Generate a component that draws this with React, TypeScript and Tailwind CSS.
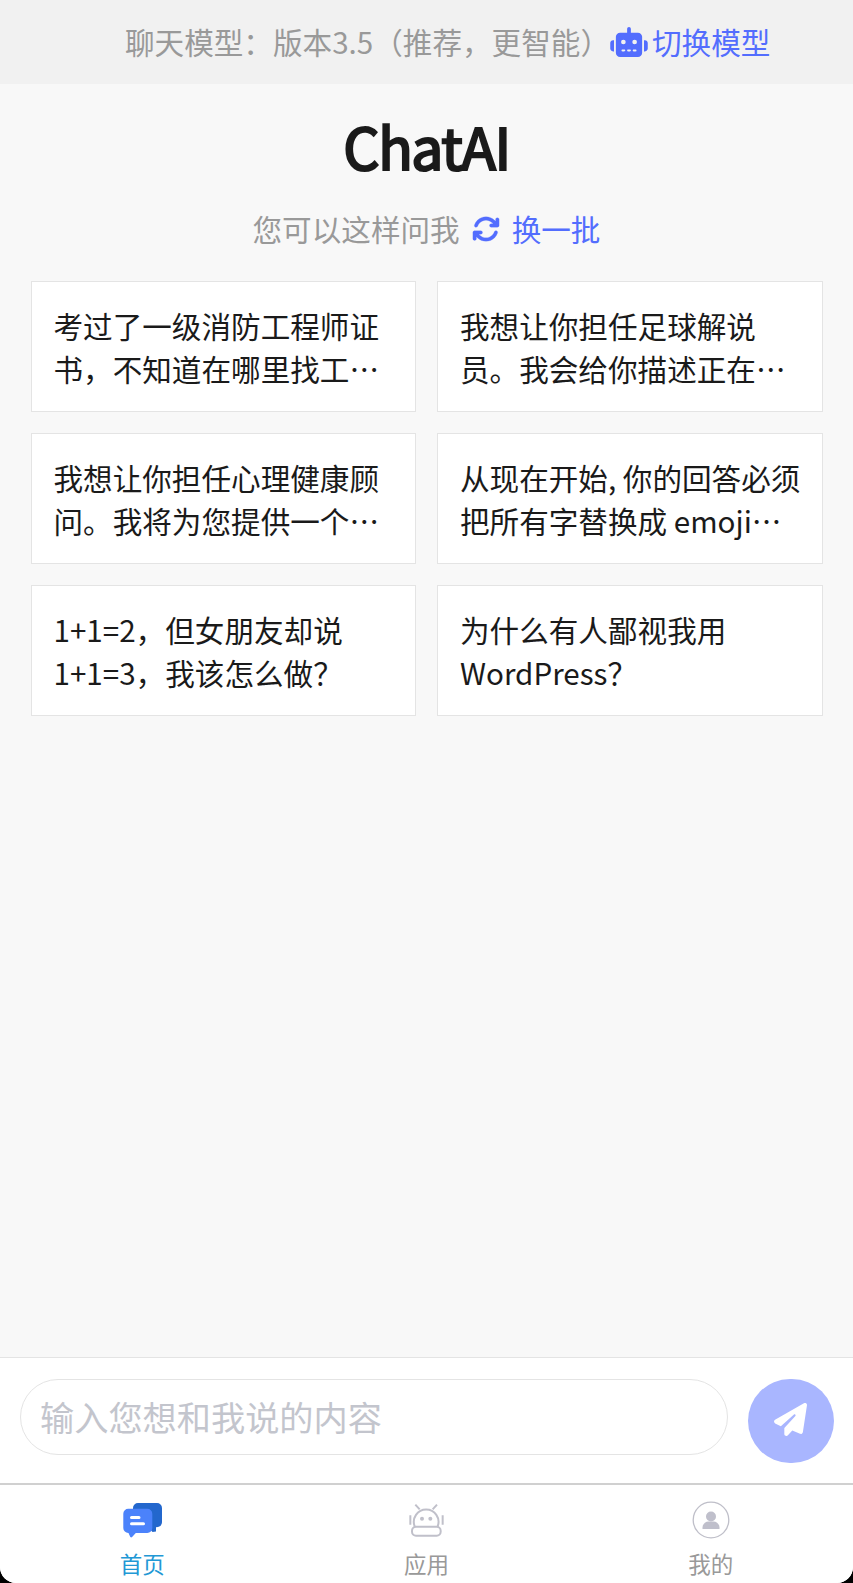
import React from 'react';
import { FaArrowsRotate, FaPaperPlane, FaRobot } from 'react-icons/fa6';

const prompts = [
  ['考过了一级消防工程师证', '书，不知道在哪里找工…'],
  ['我想让你担任足球解说', '员。我会给你描述正在…'],
  ['我想让你担任心理健康顾', '问。我将为您提供一个…'],
  ['从现在开始, 你的回答必须', '把所有字替换成 emoji…'],
  ['1+1=2，但女朋友却说', '1+1=3，我该怎么做？'],
  ['为什么有人鄙视我用', 'WordPress？'],
];

const HomeIcon = () => (
  <svg width="40" height="36" viewBox="0 0 40 36">
    <path d="M16 1h19a5 5 0 0 1 5 5v14a5 5 0 0 1-4 5l-2 .3v4.2l-3.5.5L26 25h-10a5 5 0 0 1-5-5V6a5 5 0 0 1 5-5z" fill="#2367cd" />
    <path d="M6.300 6.700h19a5 5 0 0 1 5 5v14.300a5 5 0 0 1-5 5H13.800l-3.700 4q-1.100 1-1.900-.3L6.500 31a5 5 0 0 1-5.200-5V11.700a5 5 0 0 1 5-5z" fill="#4b82fb" />
    <path d="M9.500 15.500h7.500M9.500 21.700h12" stroke="#fff" strokeWidth="3" strokeLinecap="round" />
  </svg>
);

const AppsIcon = () => (
  <svg width="35" height="34" viewBox="89 70 105 102" fill="none" stroke="#c0c0ca" strokeWidth="6">
    <path d="M108 75l13 14M173 75l-13 14M93 107v28M190 107v28" />
    <path d="M106 140a37 37 0 1 1 69 0" />
    <rect x="98" y="141" width="86" height="27" rx="12" />
    <circle cx="128" cy="117" r="6" fill="#c0c0ca" stroke="none" />
    <circle cx="153" cy="117" r="6" fill="#c0c0ca" stroke="none" />
  </svg>
);

const UserIcon = () => (
  <svg width="38" height="38" viewBox="0 0 38 38">
    <circle cx="19" cy="19" r="17.800" fill="none" stroke="#bfbfc9" strokeWidth="1.300" />
    <circle cx="19" cy="15.500" r="5" fill="#bfbfcb" />
    <path d="M10.500 28v-1.500c0-3.500 3-6 6-6h5c3 0 6 2.500 6 6V28z" fill="#bfbfcb" />
  </svg>
);

const tabs = [
  { label: '首页', icon: <HomeIcon />, color: 'text-[#2298d5]' },
  { label: '应用', icon: <AppsIcon />, color: 'text-[#999999]' },
  { label: '我的', icon: <UserIcon />, color: 'text-[#999999]' },
];

const App = () => {
  return (
    <div lang="zh-CN" className="h-[1583px] w-[853px] overflow-hidden bg-black font-['Noto_Sans_CJK_SC',sans-serif]">
      <div className="flex h-full flex-col overflow-hidden rounded-b-[16px] bg-[#f8f8f8]">
        {/* Model bar */}
        <header className="flex h-[84px] shrink-0 items-center bg-[#f1f1f1] pl-[125px] text-[29.6px] whitespace-nowrap text-[#999999]">
          <span>聊天模型：版本3.5（推荐，更智能）</span>
          <button className="flex items-center gap-1 text-[#536dfe]">
            <FaRobot className="mt-px h-[30px] w-[38px]" />
            切换模型
          </button>
        </header>

        {/* Suggestions */}
        <main className="flex flex-1 flex-col items-center">
          <h1 className="mt-[26px] text-[57px] leading-[70px] font-normal tracking-[-1.4px] text-[#1a1a1a] [-webkit-text-stroke:2.2px_#1a1a1a]">
            ChatAI
          </h1>
          <div className="mt-[27px] flex items-center text-[29.6px] leading-[44px] text-[#999999]">
            <span>您可以这样问我</span>
            <button className="ml-[12px] flex items-center gap-[12px] text-[#536dfe]">
              <FaArrowsRotate className="size-[28px] stroke-[4px]" />
              换一批
            </button>
          </div>
          <div className="mt-[30px] grid w-[792px] grid-cols-2 gap-x-[21px] gap-y-[21px]">
            {prompts.map(([first, second]) => (
              <div
                key={first}
                className="h-[131px] border border-[#e4e4e4] bg-white pt-[22px] pl-[22px] text-[29.6px] leading-[43.400px] whitespace-nowrap text-[#1a1a1a]"
              >
                <p>{first}</p>
                <p>{second}</p>
              </div>
            ))}
          </div>
        </main>

        {/* Message input */}
        <div className="flex h-[126px] shrink-0 items-start border-t border-[#e4e4e4] bg-white pt-[21px] pl-[20px]">
          <div className="flex h-[76px] w-[708px] items-center rounded-full border border-[#e4e4e4] pl-[19px] text-[34.200px] text-[#c3c5cd]">
            输入您想和我说的内容
          </div>
          <button className="ml-[20px] flex h-[84px] w-[86px] items-center justify-center rounded-full bg-[#a9b6ff] pr-px pb-[3px] text-white">
            <FaPaperPlane className="size-[33px]" />
          </button>
        </div>

        {/* Tab bar */}
        <nav className="grid h-[100px] shrink-0 grid-cols-3 border-t-2 border-[#d0d0d0] bg-white">
          {tabs.map((tab) => (
            <div key={tab.label} className={`flex flex-col items-center ${tab.color}`}>
              <div className="mt-[16px] flex h-[38px] items-center">{tab.icon}</div>
              <span className="mt-[7px] text-[22.500px] leading-[34px]">{tab.label}</span>
            </div>
          ))}
        </nav>
      </div>
    </div>
  );
};

export default App;
